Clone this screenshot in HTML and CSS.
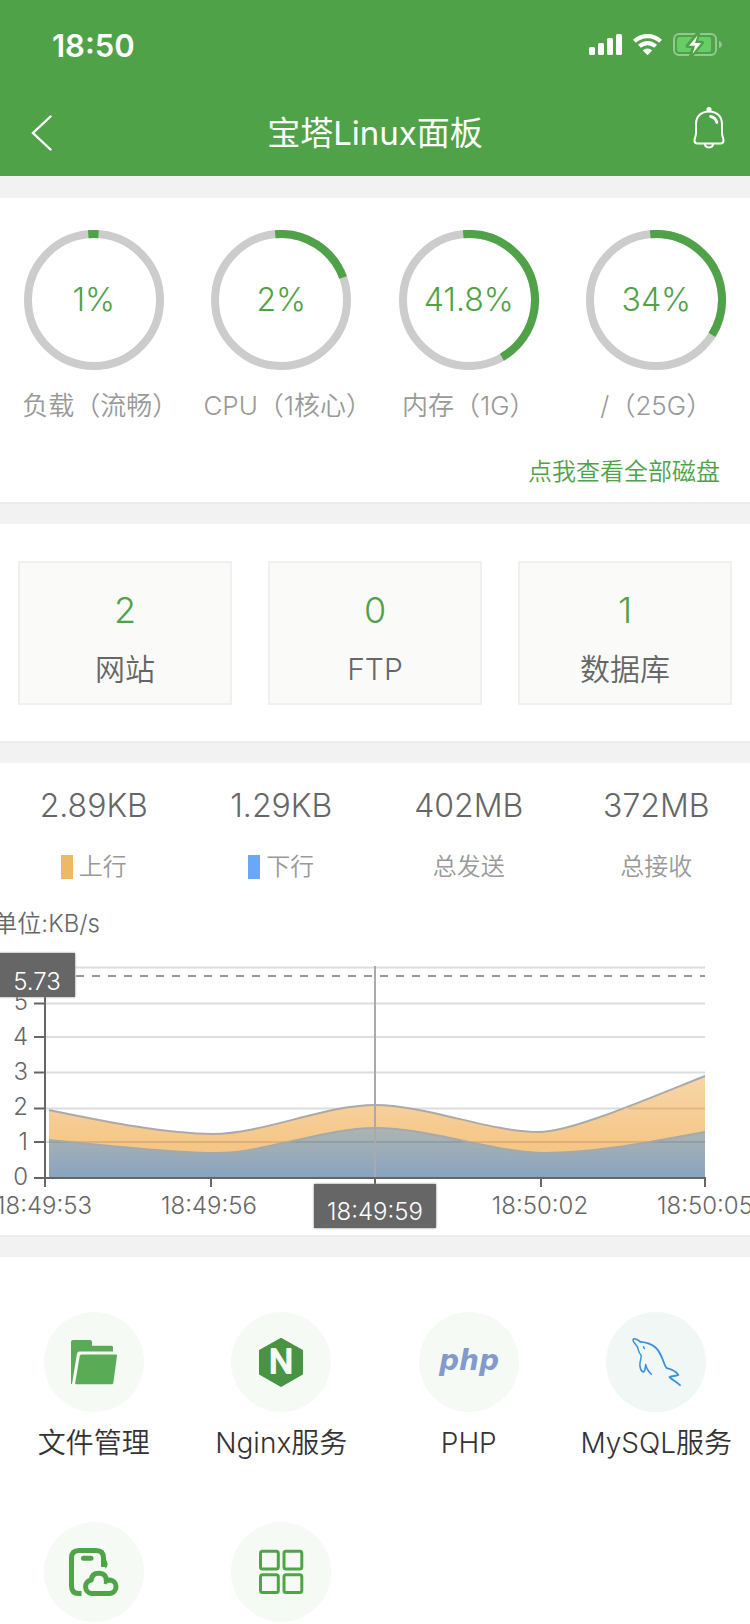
FILE: index.html
```
<!DOCTYPE html>
<html lang="zh-CN">
<head>
<meta charset="utf-8">
<meta name="viewport" content="width=device-width, initial-scale=1">
<title>宝塔Linux面板</title>
<link rel="stylesheet" href="styles.css">
</head>
<body>
<header class="header">
  <div class="status-bar">
    <time class="clock">18:50</time>
    <div class="status-icons">
      <svg width="33" height="24" viewBox="0 0 33 24" fill="#fff" aria-hidden="true"><rect x="0" y="14" width="6" height="8" rx="1.5"/><rect x="9" y="10" width="6" height="12" rx="1.5"/><rect x="18" y="5" width="6" height="17" rx="1.5"/><rect x="27" y="1" width="6" height="21" rx="1.5"/></svg>
      <svg width="29" height="24" viewBox="0 0 29 24" fill="none" stroke="#fff" stroke-width="4.2" aria-hidden="true"><path d="M1.4 8.3A19 19 0 0 1 27.6 8.3"/><path d="M6.4 13.3A11.8 11.8 0 0 1 22.6 13.3"/><path d="M14.5 22.2 9.8 17.5A6.8 6.8 0 0 1 19.2 17.5Z" fill="#fff" stroke="none"/></svg>
      <svg width="49" height="24" viewBox="0 0 49 24" aria-hidden="true"><rect x="1" y="1" width="42" height="21" rx="5" fill="none" stroke="#fff" stroke-opacity=".4" stroke-width="2"/><path d="M46 7.8Q49 9 49 11.5T46 15.2Z" fill="#fff" fill-opacity=".4"/><rect x="4" y="4" width="34" height="15" rx="2.5" fill="#67ce67"/><path d="M25 .5 14.5 13H21L18 23 29 9.800H22.500Z" fill="#fff" stroke="#4fa247" stroke-width="4" stroke-linejoin="round"/><path d="M24.500 2.500 16 12.800H22L19.500 21 28 10H22Z" fill="#fff"/></svg>
    </div>
  </div>
  <nav class="nav-bar">
    <button class="nav-button nav-button-start" type="button" aria-label="返回"><svg width="22" height="36" viewBox="0 0 22 36" fill="none" stroke="#fff" stroke-width="2.400" stroke-linecap="round"><path d="M19.500 1.500 2 18 19.500 34.500"/></svg></button>
    <h1 class="title">宝塔Linux面板</h1>
    <button class="nav-button nav-button-end" type="button" aria-label="通知"><svg width="32" height="42" viewBox="0 0 32 42" fill="none" stroke="#fff" stroke-width="2" stroke-linecap="round" stroke-linejoin="round"><path d="M3 26V17C3 9 8.500 4.500 16 4.500S29 9 29 17V26C29 29 30.500 31 30.500 33.500 30.500 35.500 29.500 36.500 27.500 36.500H4.500C2.500 36.500 1.500 35.500 1.500 33.500 1.500 31 3 29 3 26Z"/><path d="M12 37C12 41.500 20 41.500 20 37" /><circle cx="16" cy="2.600" r="1.600" fill="#fff"/><path d="M17.500 9.500C20.500 10 23 12.500 24 15.500" stroke-width="2.800"/></svg></button>
  </nav>
</header>

<main>
  <section class="panel usage">
    <div class="four-columns">
      <div class="gauge">
        <div class="ring"><svg viewBox="0 0 140 140"><circle class="ring-track" cx="70" cy="70" r="66"/><circle class="ring-value" cx="70" cy="70" r="66" pathLength="360" stroke-dasharray="9 360"/></svg><span class="ring-text">1%</span></div>
        <div class="gauge-label">负载（流畅<span class="half-width">）</span></div>
      </div>
      <div class="gauge">
        <div class="ring"><svg viewBox="0 0 140 140"><circle class="ring-track" cx="70" cy="70" r="66"/><circle class="ring-value" cx="70" cy="70" r="66" pathLength="360" stroke-dasharray="75 360"/></svg><span class="ring-text">2%</span></div>
        <div class="gauge-label">CPU（1核心<span class="half-width">）</span></div>
      </div>
      <div class="gauge">
        <div class="ring"><svg viewBox="0 0 140 140"><circle class="ring-track" cx="70" cy="70" r="66"/><circle class="ring-value" cx="70" cy="70" r="66" pathLength="360" stroke-dasharray="155 360"/></svg><span class="ring-text">41.8%</span></div>
        <div class="gauge-label">内存（1G）</div>
      </div>
      <div class="gauge">
        <div class="ring"><svg viewBox="0 0 140 140"><circle class="ring-track" cx="70" cy="70" r="66"/><circle class="ring-value" cx="70" cy="70" r="66" pathLength="360" stroke-dasharray="127 360"/></svg><span class="ring-text">34%</span></div>
        <div class="gauge-label">/（25G）</div>
      </div>
    </div>
    <a class="disk-link" href="#disks">点我查看全部磁盘</a>
  </section>

  <section class="panel counts">
    <a class="count" href="#sites"><span class="count-number">2</span><span class="count-name">网站</span></a>
    <a class="count" href="#ftp"><span class="count-number">0</span><span class="count-name">FTP</span></a>
    <a class="count" href="#databases"><span class="count-number">1</span><span class="count-name">数据库</span></a>
  </section>

  <section class="panel traffic">
    <div class="four-columns">
      <div class="stat"><span class="stat-value">2.89KB</span><span class="stat-name"><i class="swatch swatch-up"></i>上行</span></div>
      <div class="stat"><span class="stat-value">1.29KB</span><span class="stat-name"><i class="swatch swatch-down"></i>下行</span></div>
      <div class="stat"><span class="stat-value">402MB</span><span class="stat-name">总发送</span></div>
      <div class="stat"><span class="stat-value">372MB</span><span class="stat-name">总接收</span></div>
    </div>
    <svg class="chart" viewBox="0 0 750 335" role="img" aria-label="流量图">
      <defs>
        <linearGradient id="up" gradientUnits="userSpaceOnUse" x1="0" y1="176" x2="0" y2="278"><stop offset="0" stop-color="#f7d6a9"/><stop offset=".6" stop-color="#f6c88a"/><stop offset="1" stop-color="#f5c079"/></linearGradient>
        <linearGradient id="down" gradientUnits="userSpaceOnUse" x1="0" y1="228" x2="0" y2="278"><stop offset="0" stop-color="#adb5b2"/><stop offset="1" stop-color="#88a3c0"/></linearGradient>
      </defs>
      <path class="grid" d="M46 67.500H705M46 103.500H705M46 137H705M46 172.500H705M46 208.500H705M46 242H705"/>
      <path fill="url(#up)" d="M49 210C103 221 165 234 213 234 262 234 325 205 375 205 425 205 490 232 539 232 570 232 640 202 705 176V277H49Z"/>
      <path fill="url(#down)" d="M49 240C103 245 170 253 216 253 265 253 325 228 375 228 430 228 495 253 545 253 595 253 650 242 705 232V277H49Z"/>
      <path class="grid-over" d="M49 242H705M628 208.500H705"/>
      <path class="series" d="M49 210C103 221 165 234 213 234 262 234 325 205 375 205 425 205 490 232 539 232 570 232 640 202 705 176"/>
      <path class="series series-low" d="M49 240C103 245 170 253 216 253 265 253 325 228 375 228 430 228 495 253 545 253 595 253 650 242 705 232"/>
      <path class="pointer" d="M375 66V278"/>
      <path class="pointer-dashed" d="M76 76H705"/>
      <path class="axis" d="M45 68V287M34 278H706M34 242H45M34 208.500H45M34 172.500H45M34 137H45M34 103.500H45M211 278V287M375 278V287M541 278V287M705 278V287"/>
      <g class="chart-text" text-anchor="end">
        <text x="100" y="32">单位:KB/s</text>
        <text x="28" y="110">5</text><text x="28" y="145">4</text><text x="28" y="180">3</text><text x="28" y="215">2</text><text x="28" y="250">1</text><text x="28" y="285">0</text>
      </g>
      <g class="chart-text" text-anchor="middle">
        <text x="44" y="314">18:49:53</text><text x="209" y="314">18:49:56</text><text x="540" y="314">18:50:02</text><text x="705" y="314">18:50:05</text>
      </g>
      <g class="tag" text-anchor="middle">
        <rect x="-6" y="53" width="81" height="44"/><text x="37" y="90">5.73</text>
        <rect x="314" y="284" width="122" height="44"/><text x="375" y="320">18:49:59</text>
      </g>
    </svg>
  </section>

  <section class="apps four-columns">
    <a class="app" href="#files">
      <svg class="app-icon" viewBox="0 0 100 100" fill="#5aab56"><path d="M27 30Q27 28 29 28H46Q48 28 48 30V33.800H67.500Q69 33.800 69 35.300V39.500H35.500Q33.500 39.500 33 41.500L28 72H27Z"/><path d="M37.500 42.500H72Q73.200 42.500 73 43.700L69.300 71Q69 72.300 67.700 72.300H32.200Q31 72.300 31.200 71L35.700 44Q36 42.500 37.500 42.500Z"/></svg>
      <span class="app-name">文件管理</span>
    </a>
    <a class="app" href="#nginx">
      <svg class="app-icon" viewBox="0 0 100 100"><path d="M50 27 71 38.600V62L50 74 29 62V38.600Z" fill="#4a9343" stroke="#4a9343" stroke-width="2" stroke-linejoin="round"/><text class="nginx-mark" x="50" y="61" text-anchor="middle">N</text></svg>
      <span class="app-name">Nginx服务</span>
    </a>
    <a class="app" href="#php">
      <svg class="app-icon" viewBox="0 0 100 100"><text class="php-mark" x="50" y="58" text-anchor="middle">php</text></svg>
      <span class="app-name">PHP</span>
    </a>
    <a class="app" href="#mysql">
      <svg class="app-icon app-icon-cool" viewBox="0 0 100 100" fill="none" stroke="#3a90da" stroke-width="1.500" stroke-linecap="round" stroke-linejoin="round"><path d="M45.300 62.300C42.500 59.500 40.500 57 39.700 52.500 39 56 39.500 59.500 37.500 60 34.500 59.500 33.500 54 34 51 34.200 48 36 44.500 35 43 32.500 41 32.500 38 31.500 35 30 32.500 27.500 30.500 27 28.300 27 25.500 31 27 34.500 29.800"/><path d="M34.500 29.800C41 30.300 45 31.500 49.500 35.500 56 41 57 51 60.500 56 64 57 70 58.500 72.300 63 69.500 64.500 66 63.500 63.500 65 66.500 68 69.500 69 74 73.200" stroke-width="1.800"/><path d="M37.500 34.800 38.300 36.500"/></svg>
      <span class="app-name">MySQL服务</span>
    </a>
    <a class="app" href="#app" aria-label="手机云端">
      <svg class="app-icon" viewBox="0 0 100 100" fill="none" stroke="#50a448" stroke-width="5"><path d="M37.500 71.500H35Q27.500 71.500 27.500 64V36Q27.500 28.500 35 28.500H52Q59.500 28.500 59.500 36V45"/><path d="M39.500 36.200H47" stroke-linecap="round"/><path d="M61 36.500Q66 42 61.500 47Z" fill="#50a448" stroke="none"/><path d="M48 71.500H66A6.800 6.800 0 0 0 66 58Q64 58 62.300 59 62.500 51.300 54.700 51.300 47.800 51.300 47.300 58A6.800 6.800 0 0 0 48 71.500Z" stroke-linejoin="round"/><path d="M62.300 58 61 62" stroke-width="3"/></svg>
    </a>
    <a class="app" href="#more" aria-label="更多">
      <svg class="app-icon" viewBox="0 0 100 100" fill="none" stroke="#50a448" stroke-width="3"><rect x="29.500" y="29.200" width="17.800" height="17.800" rx="2"/><rect x="53" y="29.200" width="17.800" height="17.800" rx="2"/><rect x="29.500" y="52.700" width="17.800" height="17.800" rx="2"/><rect x="53" y="52.700" width="17.800" height="17.800" rx="2"/></svg>
    </a>
  </section>
</main>
</body>
</html>
```
FILE: styles.css
```
:root {
  --green: #4fa247;
}

* {
  box-sizing: border-box;
}

body {
  margin: 0;
  background: #f2f2f2;
  color: #666;
  font-family: Inter, "Noto Sans CJK SC", sans-serif;
  font-weight: 350;
  overflow-x: hidden;
}

svg {
  display: block;
}

a {
  color: inherit;
  text-decoration: none;
}

.header {
  background: var(--green);
  color: #fff;
}

.status-bar {
  display: flex;
  justify-content: space-between;
  align-items: center;
  height: 88px;
  padding: 2px 28px 0 52px;
}

.clock {
  font-size: 31px;
  font-weight: 600;
}

.status-icons {
  display: flex;
  gap: 11px;
}

.nav-bar {
  display: grid;
  grid-template-columns: 1fr auto 1fr;
  align-items: center;
  height: 88px;
  padding: 2px 25px 0;
}

.nav-button {
  padding: 0;
  border: 0;
  background: none;
}

.nav-button-start {
  justify-self: start;
  padding-left: 6px;
}

.nav-button-end {
  justify-self: end;
  padding-bottom: 10px;
}

.title {
  margin: 0;
  font-size: 33px;
  font-weight: 380;
  line-height: 48px;
}

.panel {
  margin-bottom: 20px;
  border-bottom: 2px solid #ededed;
  background: #fff;
}

.four-columns {
  display: grid;
  grid-template-columns: repeat(4, 1fr);
}

.usage {
  margin-top: 22px;
  padding: 32px 0 10px;
}

.gauge {
  display: flex;
  flex-direction: column;
  align-items: center;
  gap: 16px;
}

.ring {
  display: grid;
  place-items: center;
  width: 140px;
}

.ring > * {
  grid-area: 1 / 1;
}

.ring svg {
  width: 100%;
}

.ring circle {
  fill: none;
  stroke-width: 8px;
}

.ring-track {
  stroke: #ccc;
}

.ring-value {
  stroke: var(--green);
  transform: rotate(-95deg);
  transform-origin: center;
}

.ring-text {
  color: var(--green);
  font-size: 32px;
  line-height: 40px;
}

.gauge-label {
  color: #999;
  font-size: 26px;
  line-height: 40px;
  white-space: nowrap;
}

.half-width {
  font-feature-settings: "halt";
}

.disk-link {
  display: block;
  width: fit-content;
  margin: 26px 30px 0 auto;
  color: var(--green);
  font-size: 24px;
  line-height: 40px;
}

.counts {
  display: grid;
  grid-template-columns: repeat(3, 1fr);
  gap: 36px;
  padding: 37px 18px 36px;
}

.count {
  display: flex;
  flex-direction: column;
  align-items: center;
  gap: 15px;
  padding: 23px 0 14px;
  border: 2px solid #f0f0f0;
  background: #fafaf9;
}

.count-number {
  color: var(--green);
  font-size: 36px;
  line-height: 48px;
}

.count-name {
  font-size: 30px;
  line-height: 40px;
}

.traffic {
  padding-top: 23px;
}

.stat {
  display: flex;
  flex-direction: column;
  align-items: center;
  gap: 21px;
}

.stat-value {
  font-size: 32px;
  line-height: 40px;
}

.stat-name {
  display: flex;
  align-items: center;
  gap: 6px;
  color: #999;
  font-size: 24px;
  line-height: 40px;
}

.swatch {
  width: 12px;
  height: 24px;
}

.swatch-up {
  background: #edb963;
}

.swatch-down {
  background: #69a7f8;
}

.chart {
  width: 100%;
  margin-top: 13px;
}

.chart path {
  stroke-width: 2px;
}

.grid {
  stroke: #ddd;
}

.grid-over {
  stroke: #000;
  stroke-opacity: .1;
}

.series {
  fill: none;
  stroke: #aaa;
}

.series-low {
  stroke: #a5a9a9;
}

.pointer {
  stroke: #aaa;
}

.pointer-dashed {
  stroke: #999;
  stroke-dasharray: 8 8;
}

.axis {
  stroke: #666;
}

.chart-text {
  fill: #666;
  font-size: 24px;
}

.tag {
  fill: #fff;
  font-size: 24px;
}

.tag rect {
  fill: #666;
  filter: drop-shadow(0 0 1px #888);
}

.apps {
  row-gap: 59px;
  padding: 55px 0 2px;
  background: #fff;
}

.app {
  display: flex;
  flex-direction: column;
  align-items: center;
  gap: 11px;
}

.app-icon {
  width: 100px;
  border-radius: 50%;
  background: #f5faf5;
}

.app-icon-cool {
  background: #f0f7f4;
}

.app-name {
  color: #333;
  font-size: 28px;
  line-height: 40px;
}

.nginx-mark {
  fill: #f5faf5;
  stroke: #f5faf5;
  stroke-width: 2px;
  stroke-linejoin: round;
  font-size: 32px;
  font-weight: 400;
}

.php-mark {
  fill: #8499cc;
  font-family: "DejaVu Sans", sans-serif;
  font-size: 28px;
  font-style: italic;
  font-weight: 700;
}
```
